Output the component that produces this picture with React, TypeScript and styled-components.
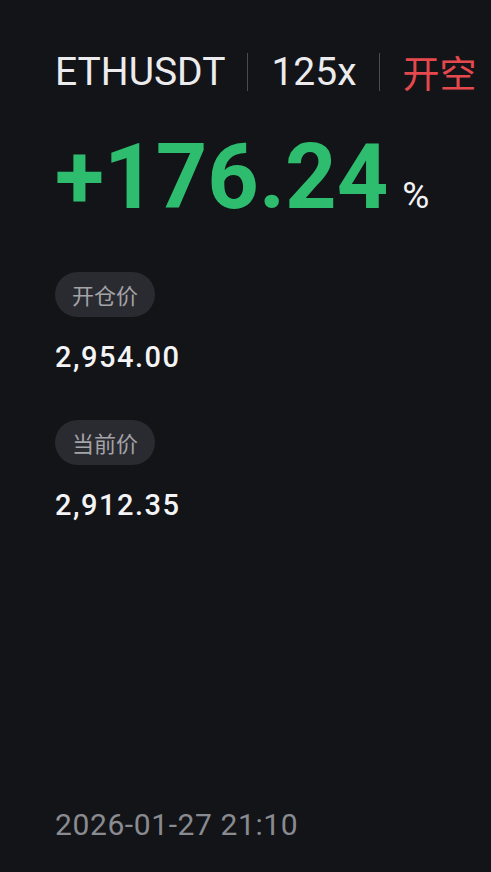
import styled, { createGlobalStyle } from "styled-components"

const GlobalStyle = createGlobalStyle`
  html, body {
    margin: 0;
    padding: 0;
    background: #131418;
  }
  body {
    font-family: Roboto, "Noto Sans CJK SC", sans-serif;
  }
`

const Page = styled.div`
  width: 491px;
  height: 872px;
  box-sizing: border-box;
  padding: 52px 0 0 55px;
  display: flex;
  flex-direction: column;
  background: #131418;
  color: #ececee;
  overflow: hidden;
`

const Header = styled.div`
  display: flex;
  align-items: center;
  height: 40px;
  font-size: 39px;
  line-height: 40px;
`

const Divider = styled.span`
  width: 1px;
  height: 38px;
  background: #4a4b50;
  margin: 0 23px 0 22px;
`

const Side = styled.span`
  color: #e5484d;
  font-family: "Noto Sans CJK SC", sans-serif;
  font-size: 37px;
`

const Profit = styled.div`
  display: flex;
  align-items: baseline;
  margin-top: 41px;
  color: #2ebd6f;
  font-weight: 700;
  font-size: 90px;
  line-height: 90px;
`

const Percent = styled.span`
  color: #f2f2f4;
  font-weight: 400;
  font-size: 37px;
  margin-left: 14px;
`

const Field = styled.div<{ $top: number }>`
  display: flex;
  flex-direction: column;
  align-items: flex-start;
  margin-top: ${p => p.$top}px;
`

const Pill = styled.span`
  height: 45px;
  padding: 0 17px;
  border-radius: 23px;
  background: #2a2b30;
  color: #a3a3a8;
  font-family: "Noto Sans CJK SC", sans-serif;
  font-size: 22px;
  line-height: 45px;
`

const Price = styled.span`
  margin-top: 23px;
  font-size: 29px;
  font-weight: 500;
  letter-spacing: 1.5px;
  color: #f4f4f6;
`

const Stamp = styled.div`
  margin-top: auto;
  margin-bottom: 30px;
  font-size: 30px;
  color: #8a8b90;
  letter-spacing: 0.6px;
`

export default function App() {
  return (
    <>
      <GlobalStyle />
      <Page>
        <Header>
          <span>ETHUSDT</span>
          <Divider />
          <span>125x</span>
          <Divider />
          <Side>开空</Side>
        </Header>
        <Profit>
          +176.24<Percent>%</Percent>
        </Profit>
        <Field $top={31}>
          <Pill>开仓价</Pill>
          <Price>2,954.00</Price>
        </Field>
        <Field $top={46}>
          <Pill>当前价</Pill>
          <Price>2,912.35</Price>
        </Field>
        <Stamp>2026-01-27 21:10</Stamp>
      </Page>
    </>
  )
}
